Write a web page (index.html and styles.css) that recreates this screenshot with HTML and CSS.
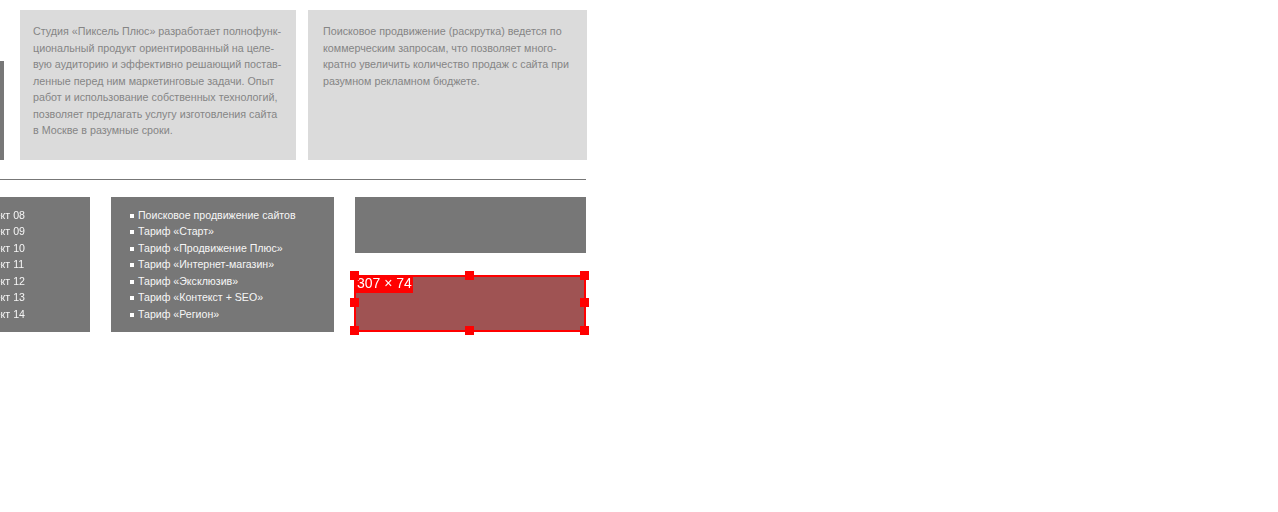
FILE: index.html
```html
<!DOCTYPE HTML>
<html>

<head>
    <meta charset="utf-8">
    <title>Пиксель Плюс</title>
    <link rel="stylesheet" href="styles.css">
</head>

<body>
<div class="page">
    <div class="top">
        <div class="stub"></div>
        <div class="card card-first">
            Студия «Пиксель Плюс» разработает полнофунк-<br>
            циональный продукт ориентированный на целе-<br>
            вую аудиторию и эффективно решающий постав-<br>
            ленные перед ним маркетинговые задачи. Опыт<br>
            работ и использование собственных технологий,<br>
            позволяет предлагать услугу изготовления сайта<br>
            в Москве в разумные сроки.
        </div>
        <div class="card card-second">
            Поисковое продвижение (раскрутка) ведется по<br>
            коммерческим запросам, что позволяет много-<br>
            кратно увеличить количество продаж с сайта при<br>
            разумном рекламном бюджете.
        </div>
    </div>

    <div class="line"></div>

    <div class="bottom">
        <div class="menu-clip">
            <ul class="menu menu-projects">
                <li>Проект 08</li>
                <li>Проект 09</li>
                <li>Проект 10</li>
                <li>Проект 11</li>
                <li>Проект 12</li>
                <li>Проект 13</li>
                <li>Проект 14</li>
            </ul>
        </div>
        <ul class="menu menu-tariffs">
            <li>Поисковое продвижение сайтов</li>
            <li>Тариф «Старт»</li>
            <li>Тариф «Продвижение Плюс»</li>
            <li>Тариф «Интернет-магазин»</li>
            <li>Тариф «Эксклюзив»</li>
            <li>Тариф «Контекст + SEO»</li>
            <li>Тариф «Регион»</li>
        </ul>
        <div class="side">
            <div class="banner"></div>
            <div class="banner banner-selected">
                <div class="sel">
                    <span class="sel-size">307 × 74</span>
                    <i class="handle h-tl"></i>
                    <i class="handle h-tc"></i>
                    <i class="handle h-tr"></i>
                    <i class="handle h-ml"></i>
                    <i class="handle h-mr"></i>
                    <i class="handle h-bl"></i>
                    <i class="handle h-bc"></i>
                    <i class="handle h-br"></i>
                </div>
            </div>
        </div>
    </div>
</div>
</body>

</html>
```

FILE: styles.css
```css
* {
    margin: 0;
    padding: 0;
    box-sizing: border-box;
}

html {
    background: #fff;
}

li {
    list-style: none;
}

/* the source picture is a scaled down shot, everything is a bit soft */
.page {
    width: 600px;
    padding: 10px 0 40px;
    font-family: "Liberation Sans", Arial, sans-serif;
    font-size: 10.72px;
    line-height: 16.5px;
    filter: blur(0.4px);
}

.top {
    display: flex;
    align-items: flex-end;
    height: 150px;
}

.stub {
    width: 4px;
    height: 99px;
    margin-right: 15.5px;
    background: #777;
}

.card {
    height: 150px;
    background: #dbdbdb;
    color: #858585;
    padding-top: 13px;
    white-space: nowrap;
}

.card-first {
    width: 276px;
    padding-left: 13.5px;
}

.card-second {
    width: 278.5px;
    margin-left: 12.5px;
    padding-left: 15px;
}

.line {
    width: 586px;
    height: 1px;
    margin-top: 19px;
    background: #777;
}

.bottom {
    display: flex;
    margin-top: 17px;
}

.menu-clip {
    width: 90px;
    height: 135px;
    overflow: hidden;
    background: #777;
}

.menu {
    height: 135px;
    padding-top: 9.6px;
    font-size: 10.6px;
    color: #f6f6f6;
    white-space: nowrap;
}

.menu-projects {
    margin-left: -24.7px;
}

.menu-tariffs {
    width: 223px;
    margin-left: 21px;
    padding-left: 19px;
    background: #777;
}

.menu-tariffs li::before {
    content: "";
    display: inline-block;
    width: 4px;
    height: 4px;
    margin-right: 4px;
    background: #fff;
    vertical-align: 1px;
}

.side {
    width: 231px;
    margin-left: 21px;
}

.banner {
    height: 56px;
    background: #777;
}

.banner-selected {
    position: relative;
    margin-top: 22px;
}

.sel {
    position: absolute;
    top: 0;
    bottom: -1px;
    left: -1px;
    width: 232px;
    background: #9f5353;
    border: 2px solid #f00;
}

.sel-size {
    position: absolute;
    left: -2px;
    top: -1px;
    width: 59px;
    height: 17px;
    padding-left: 3px;
    background: #f00;
    color: #fff;
    font-size: 14px;
    line-height: 15px;
    white-space: nowrap;
}

.handle {
    position: absolute;
    width: 9px;
    height: 9px;
    background: #f00;
}

.h-tl { left: -6px; top: -6px; }
.h-tc { left: 109px; top: -6px; }
.h-tr { right: -5px; top: -6px; }
.h-ml { left: -6px; top: 21px; }
.h-mr { right: -5px; top: 21px; }
.h-bl { left: -6px; bottom: -5px; }
.h-bc { left: 109px; bottom: -5px; }
.h-br { right: -5px; bottom: -5px; }
```
